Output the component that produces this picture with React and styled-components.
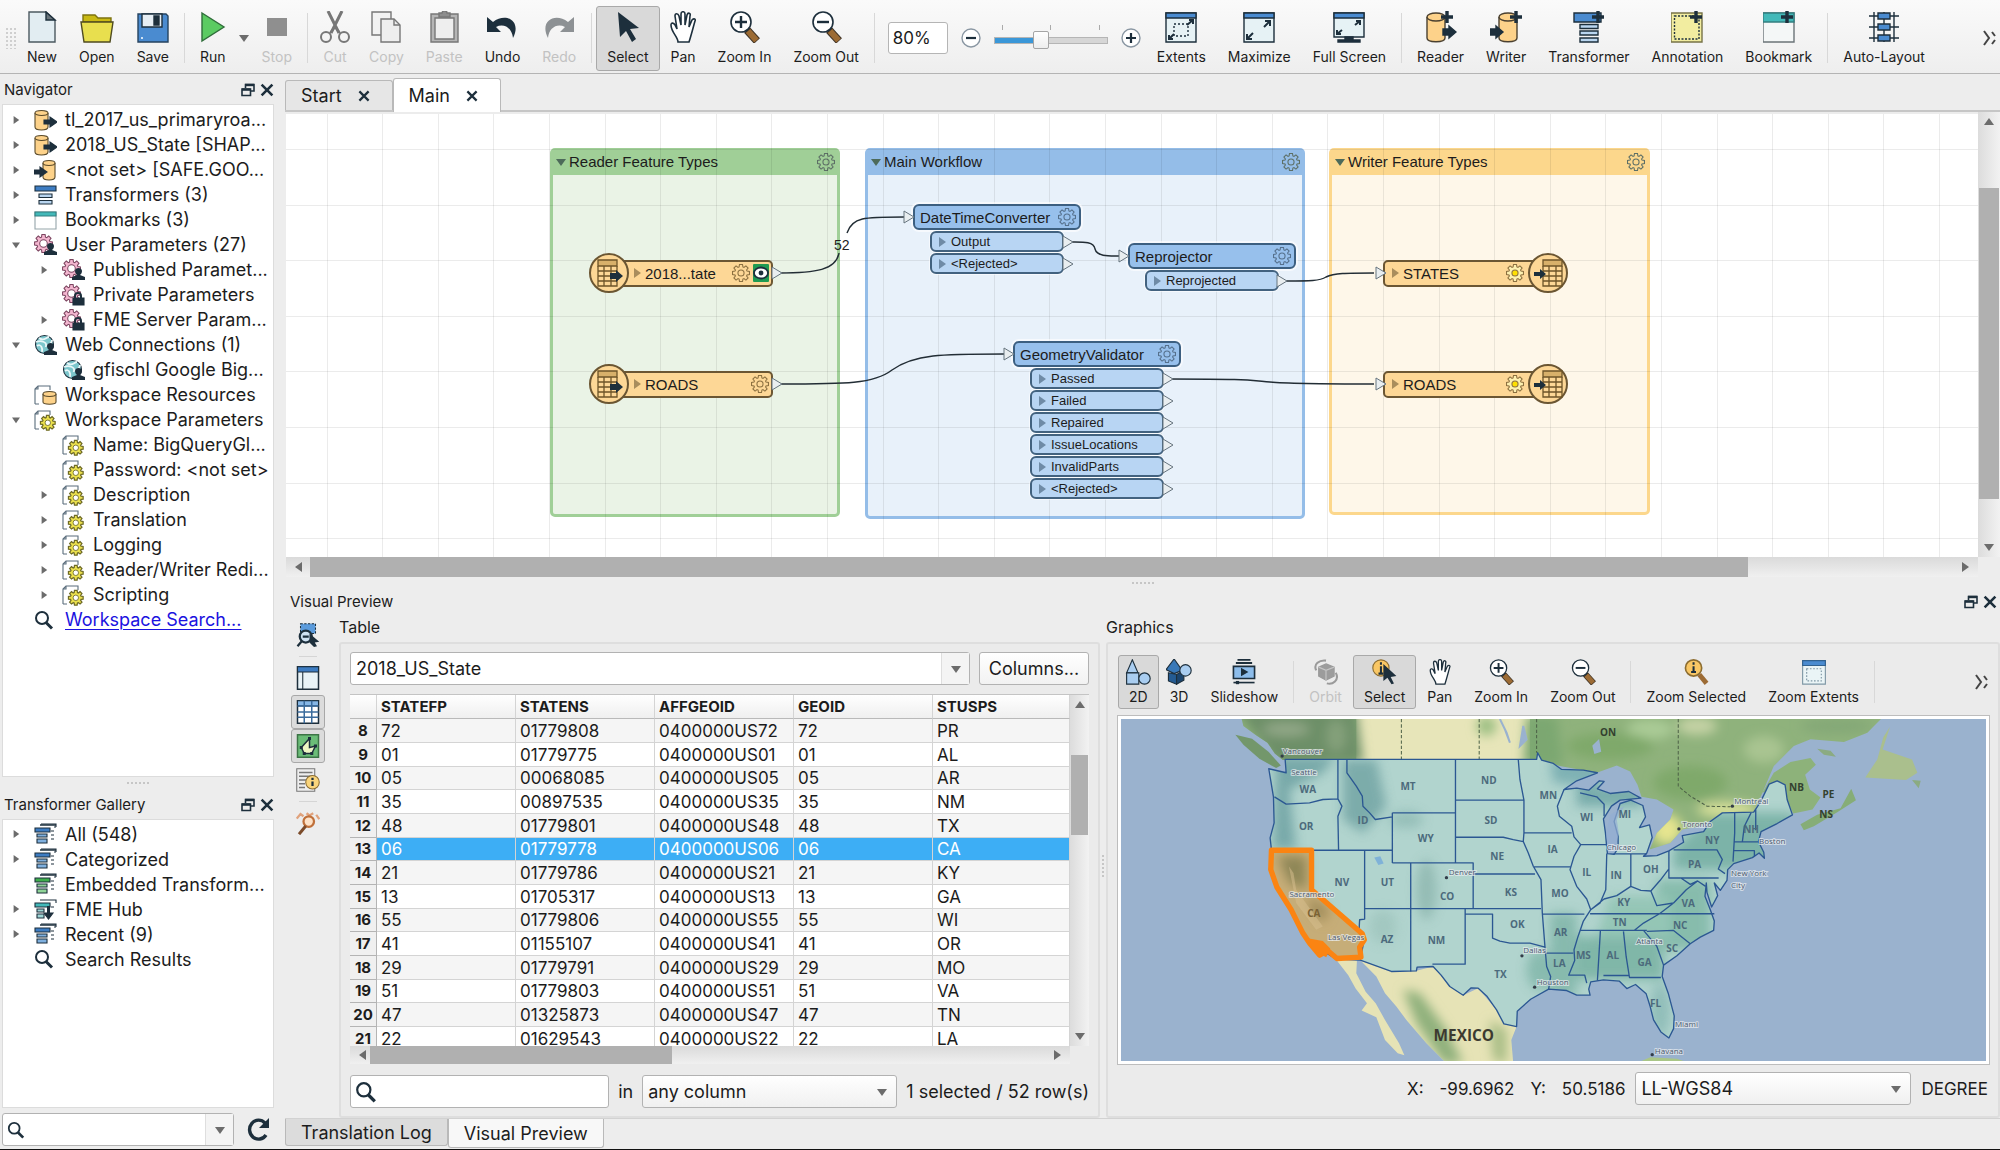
import React from "react";
import styled, { createGlobalStyle, css } from "styled-components";

const Global = createGlobalStyle`
  *, *::before, *::after { box-sizing: border-box; }
  html, body { margin: 0; height: 100%; }
  body { font-family: Inter, Roboto, "Liberation Sans", sans-serif; font-size: 16px; color: #1c1c1c; background: #ededed; }
  button, input, select { font: inherit; color: inherit; margin: 0; }
  svg { display: block; flex: none; }
`;

const INK = "#1d2f3c";

/* ---------- layout ---------- */
const Window = styled.div`
  display: flex; flex-direction: column; height: 100vh; min-height: 900px; min-width: 1280px; overflow: hidden;
  background: #ededed; border-bottom: 1px solid #111;
`;
const Toolbar = styled.header`
  display: flex; align-items: center; height: 74px; padding: 3px 4px 0 5px;
  background: linear-gradient(#fafafa, #eeeeee); border-bottom: 1px solid #b4b4b4;
`;
const Body = styled.div`display: flex; flex: 1; min-height: 0;`;
const Sidebar = styled.aside`display: flex; flex-direction: column; width: 275px; flex: none; padding: 0 1px 3px 2px;`;
const Main = styled.main`display: flex; flex-direction: column; flex: 1; min-width: 0; margin-left: 10px;`;
const Spacer = styled.div`flex: 1;`;

/* ---------- toolbar parts ---------- */
const Grip = styled.div`
  width: 11px; height: 22px; background-image: radial-gradient(#cfcfcf 1px, transparent 1px); background-size: 4px 4px;
`;
const Tool = styled.button`
  display: flex; flex-direction: column; align-items: center; gap: ${p => (p.$small ? 2 : 4)}px;
  padding: ${p => (p.$small ? 3 : 4)}px 10px 0; height: ${p => (p.$small ? 54 : 65)}px;
  border: 1px solid ${p => (p.$on ? "#a9a9a9" : "transparent")}; border-radius: 3px;
  background: ${p => (p.$on ? "#d9d9d9" : "none")}; color: ${p => (p.$off ? "#c2c2c2" : "#1c1c1c")};
  font-size: 14px; line-height: 20px; white-space: nowrap; flex: none;
  svg { margin: 0 -4px; }
`;
const Rule = styled.div`width: 1px; height: ${p => (p.$small ? 42 : 50)}px; margin: 0 4px; background: #d8d8d8; flex: none;`;
const DropArrow = styled.button`width: 14px; height: 40px; padding: 0; border: 0; background: none; display: grid; place-items: center;`;
const ZoomGroup = styled.div`display: flex; align-items: center; gap: 13px; margin: 0 5px 0 9px; flex: none;`;
const ZoomField = styled.input`
  width: 60px; height: 32px; padding: 0 4px; font-size: 17px; border: 1px solid #b5b5b5; border-radius: 3px; background: #fff;
`;
const RoundButton = styled.button`width: 20px; height: 20px; padding: 0; border: 0; background: none;`;
const SliderBox = styled.div`display: flex; flex-direction: column; width: 114px; gap: 2px; padding-bottom: 2px;`;
const Ticks = styled.div`display: flex; justify-content: space-between; padding: 0 8px; span { width: 1px; height: 5px; background: #aaa; }`;
const Slider = styled.input`
  appearance: none; width: 100%; height: 18px; background: none;
  &::-webkit-slider-runnable-track { height: 7px; border: 1px solid #b5b5b5; background: linear-gradient(90deg, #3a97d8 40%, #d6d6d6 40%); }
  &::-webkit-slider-thumb { appearance: none; width: 16px; height: 18px; margin-top: -7px; border: 1px solid #a5a5a5; border-radius: 2px; background: linear-gradient(#fff, #eee); }
`;

/* ---------- docks and trees ---------- */
const DockHead = styled.div`
  display: flex; align-items: center; justify-content: space-between; height: ${p => p.$h}px; flex: none; padding: 2px ${p => (p.$wide ? 3 : 0)}px 0 ${p => (p.$wide ? 5 : 2)}px;
  h2 { margin: 0; font-size: 15px; line-height: 20px; font-weight: 400; }
`;
const DockButtons = styled.div`display: flex; gap: 5px; button { padding: 0; border: 0; background: none; }`;
const Tree = styled.ul`
  list-style: none; margin: 0; padding: 2px 0; background: #fff; border: 1px solid #dcdcdc; overflow: hidden;
  flex: ${p => p.$flex}; min-height: 0;
`;
const Row = styled.li`
  display: flex; align-items: center; height: 25px; padding-left: ${p => (p.$deep ? 35 : 7)}px; white-space: nowrap; font-size: 18px;
  a { color: #1b12e0; text-underline-offset: 3px; text-decoration-thickness: 1px; }
`;
const Twist = styled.span`width: 12px; margin-right: 12px; display: grid; place-items: center;`;
const RowIcon = styled.span`width: 23px; margin-right: 8px;`;
const HandleDots = styled.div`
  height: ${p => p.$h}px; flex: none; display: grid; place-items: center;
  &::after { content: ""; width: 24px; height: 4px; background-image: radial-gradient(#c6c6c6 1px, transparent 1px); background-size: 4px 4px; }
`;
const SearchRow = styled.div`display: flex; align-items: center; gap: 12px; margin-top: 5px; padding-right: 4px; button { padding: 0; border: 0; background: none; }`;
const Combo = styled.div`
  display: flex; align-items: center; position: relative; height: 33px; border: 1px solid #b2b2b2; border-radius: 3px;
  background: ${p => (p.$plain ? "linear-gradient(#ffffff, #f0f0f0)" : "#fff")}; flex: ${p => p.$flex || "none"}; min-width: 0; width: ${p => p.$w || "auto"};
  padding-left: ${p => (p.$icon ? 4 : 0)}px;
  input, select { appearance: none; flex: 1; min-width: 0; height: 100%; border: 0; background: none; padding: 0 5px; font-size: 18px; outline: 0; }
`;
const ComboArrow = styled.span`
  position: absolute; right: 0; top: 0; bottom: 0; width: 28px; display: grid; place-items: center; pointer-events: none;
  ${p => p.$split && css`background: #f4f4f4; border-left: 1px solid #dedede;`}
`;

/* ---------- tabs ---------- */
const Tabs = styled.div`
  display: flex; align-items: flex-end; height: 38px; flex: none; border-bottom: 2px solid #c6c6c6; padding: 0;
`;
const Tab = styled.button`
  display: flex; align-items: center; gap: 16px; height: ${p => (p.$on ? 34 : 30)}px; padding: 0 22px 0 15px; margin-bottom: ${p => (p.$on ? -2 : 0)}px;
  border: 1px solid #b9b9b9; border-bottom: 0; border-radius: 3px 3px 0 0; background: ${p => (p.$on ? "#fff" : "#e6e6e6")}; font-size: 18px;
`;
const BottomTabs = styled.div`display: flex; align-items: flex-start; height: 31px; flex: none; border-top: 1px solid #d2d2d2;`;
const BottomTab = styled.button`
  height: ${p => (p.$on ? 29 : 27)}px; padding: 0 15px; border: 1px solid #b9b9b9; border-top: 0; border-radius: 0 0 3px 3px;
  background: ${p => (p.$on ? "#f8f8f8" : "#dcdcdc")}; font-size: 18px; white-space: nowrap;
`;

/* ---------- canvas ---------- */
const Workspace = styled.section`display: grid; grid-template-columns: 1fr 22px; grid-template-rows: 1fr 20px; flex: 1; min-height: 0; margin-left: 1px;`;
const Canvas = styled.div`position: relative; overflow: hidden; background: #fff; border-top: 2px solid #ececec;`;
const Layer = styled.svg`position: absolute; inset: 0; width: 100%; height: 100%;`;
const ScrollV = styled.div`
  display: flex; flex-direction: column; align-items: center; justify-content: space-between; padding: 5px 0; background: linear-gradient(90deg, #dcdcdc, #f2f2f2);
  position: relative;
`;
const ScrollH = styled.div`
  display: flex; align-items: center; justify-content: space-between; padding: 0 8px; background: linear-gradient(#dadada, #f0f0f0); position: relative;
`;
const Thumb = styled.div`
  position: absolute; background: #b0b0b0;
  ${p => (p.$v ? css`left: 1px; right: 1px; top: ${p.$from}; height: ${p.$len};` : css`top: 0; bottom: 0; left: ${p.$from}; width: ${p.$len};`)}
`;
const Bookmark = styled.div`
  position: absolute; left: ${p => p.$x}px; top: 34px; width: ${p => p.$w}px; height: ${p => p.$h}px;
  border: 3px solid ${p => p.$line}; border-radius: 5px; background: ${p => p.$fill};
`;
const BookmarkHead = styled.div`
  display: flex; align-items: center; gap: 3px; height: 24px; padding: 0 2px 2px 3px; background: ${p => p.$line};
  font: 15px/20px "Liberation Sans", Arial, sans-serif; svg:last-child { margin-left: auto; }
`;
const Node = styled.div`position: absolute; left: ${p => p.$x}px; top: ${p => p.$y}px; width: 168px; font-family: "Liberation Sans", Arial, sans-serif;`;
const NodeHead = styled.div`
  display: flex; align-items: center; justify-content: space-between; height: 26px; margin-bottom: 1px; padding: 0 3px 0 5px; font-size: 15px;
  border: 2px solid #3c5f80; border-radius: 6px; background: #97c0ec; box-shadow: 0 0 0 2px rgba(255,255,255,.6);
`;
const Port = styled.div`
  position: relative; display: flex; align-items: center; gap: 4px; width: 134px; height: 21px; margin: 0 0 1px 17px; padding-left: 5px; font-size: 13px;
  border: 2px solid #42627f; border-radius: 6px; background: #b8d5f3; box-shadow: 0 0 0 1px rgba(255,255,255,.6);
`;
const Feature = styled.div`
  position: absolute; left: ${p => p.$x}px; top: ${p => p.$y}px; display: flex; align-items: center; height: 40px;
  flex-direction: ${p => (p.$writer ? "row-reverse" : "row")}; font: 15px "Liberation Sans", Arial, sans-serif;
`;
const FeatureBar = styled.div`
  display: flex; align-items: center; gap: 3px; width: 164px; height: 27px; border: 2px solid #6b5633; border-radius: 5px; background: #fdd796;
  padding: ${p => (p.$writer ? "0 21px 0 5px" : "0 2px 0 21px")}; margin: ${p => (p.$writer ? "0 -19px 0 0" : "0 0 0 -20px")};
  b { font-weight: 400; margin-right: auto; }
`;
const Disc = styled.div`width: 40px; height: 40px; border: 2px solid #6b5633; border-radius: 50%; background: #fdd796; z-index: 1; display: grid; place-items: center;`;

/* ---------- preview ---------- */
const Dock = styled.section`display: flex; flex-direction: column; flex: none;`;
const DockBody = styled.div`display: flex; height: 504px;`;
const ToolColumn = styled.div`display: flex; flex-direction: column; align-items: center; width: 54px; padding: 4px 9px 0 0; flex: none;`;
const SideTool = styled.button`
  display: grid; place-items: center; width: 34px; height: 34px; padding: 0; border: 1px solid ${p => (p.$on ? "#a8a8a8" : "transparent")}; border-radius: 3px;
  background: ${p => (p.$on ? "#dcdcdc" : "none")}; flex: none;
`;
const SideRule = styled.div`width: 18px; height: 1px; margin: 4px 0; background: #d5d5d5;`;
const Group = styled.section`display: flex; flex-direction: column; ${p => p.$w ? css`width: ${p.$w}px; flex: none;` : css`flex: 1; min-width: 0;`}`;
const GroupTitle = styled.h3`margin: 0; height: 28px; font-size: 16px; line-height: 27px; font-weight: 400;`;
const GroupBox = styled.div`
  display: flex; flex-direction: column; flex: 1; min-height: 0; border: 2px solid #dedede; border-radius: 3px; padding: ${p => p.$pad}; background: #ebebeb;
`;
const Line = styled.div`display: flex; align-items: center; gap: ${p => p.$gap}px; flex: none; margin-bottom: ${p => p.$mb || 0}px; font-size: 18px; white-space: nowrap;`;
const GraphicsTools = styled.div`display: flex; align-items: center; flex: none; margin-bottom: 7px; padding: 0 10px;`;
const Status = styled.div`display: flex; align-items: center; justify-content: flex-end; gap: 10px; flex: none; padding-right: 10px; font-size: 17px; white-space: nowrap;`;
const Coordinates = styled.div`display: flex; gap: 16px;`;
const PushButton = styled.button`height: 33px; width: 110px; border: 1px solid #b2b2b2; border-radius: 3px; background: linear-gradient(#fff, #f2f2f2); font-size: 18px; padding: 0;`;
const TableFrame = styled.div`display: grid; grid-template-columns: 1fr 19px; grid-template-rows: 1fr 18px; flex: 1; min-height: 0; margin-bottom: 11px; border-top: 1px solid #c4c4c4;`;
const TableView = styled.div`overflow: hidden; min-height: 0; background: #fff;`;
const Data = styled.table`
  width: 100%; border-collapse: separate; border-spacing: 0; table-layout: fixed; font-size: 17px; line-height: 16px;
  th, td { padding: 0 0 0 4px; height: 24px; text-align: left; white-space: nowrap; border-right: 1px solid #d4d4d4; border-bottom: 1px solid #d4d4d4; }
  thead th { height: 24px; font-size: 15px; background: linear-gradient(#fff, #efefef); border-bottom-color: #b9b9b9; }
  tbody th { padding: 0; text-align: center; font-size: 15px; background: #f0f0f0; border-color: #b4b4b4; }
  tbody tr:nth-child(odd) td { background: #f5f5f5; }
  tbody tr:nth-child(3n) > * { height: 23px; }
  tbody tr[aria-selected="true"] td { background: #3daef5; color: #fff; }
`;
const Divider = styled.div`
  width: 6px; flex: none; display: grid; place-items: center;
  &::after { content: ""; width: 4px; height: 24px; background-image: radial-gradient(#c6c6c6 1px, transparent 1px); background-size: 4px 4px; }
`;
const MapFrame = styled.div`flex: 1; min-height: 0; border: 3px solid #fff; outline: 1px solid #bdbdbd; margin: 0 9px 8px 10px; svg { width: 100%; height: 100%; }`;

/* ---------- small glyphs ---------- */
const Tri = ({ d = "right", s = 8, c = "#6c6c6c" }) => (
  <svg width={s} height={s} viewBox="0 0 10 10">
    <path fill={c} d={{ right: "M2 0L9 5L2 10Z", left: "M8 0L1 5L8 10Z", down: "M0 2H10L5 9Z", up: "M0 8H10L5 1Z" }[d]} />
  </svg>
);
const Float = () => (
  <svg width="14" height="14" viewBox="0 0 14 14" fill="none" stroke={INK} strokeWidth="1.6">
    <path d="M4.5 5V1.5H13V8H10" /><path d="M4 2H13" strokeWidth="2.4" /><path d="M1 6H9.5V12.5H1Z" /><path d="M1 6.6H9.5" strokeWidth="2.4" />
  </svg>
);
const Cross = ({ s = 13 }) => <svg width={s} height={s} viewBox="0 0 13 13" stroke={INK} strokeWidth="2.4"><path d="M1.5 1.5L11.5 11.5M11.5 1.5L1.5 11.5" /></svg>;
const Chevrons = () => <svg width="14" height="18" viewBox="0 0 14 18" fill="none" stroke="#444" strokeWidth="2"><path d="M2 2L7 9L2 16M10 3L13 7M10 15L13 11" /></svg>;
const Lens = ({ s = 20 }) => (
  <svg width={s} height={s} viewBox="0 0 20 20" fill="none" stroke={INK}><circle cx="8" cy="8" r="6" strokeWidth="2" /><path d="M12 12.5L18 18.5" strokeWidth="3" /></svg>
);
const gearPath = (() => {
  const n = 8, pts = [];
  for (let i = 0; i < n; i++) {
    [[-0.3, 7], [-0.18, 9.6], [0.18, 9.6], [0.3, 7]].forEach(([o, r]) => {
      const a = (i * 2 * Math.PI) / n + o;
      pts.push(`${(10 + r * Math.sin(a)).toFixed(1)} ${(10 - r * Math.cos(a)).toFixed(1)}`);
    });
  }
  return "M" + pts.join("L") + "Z";
})();
const Gear = ({ s = 18, fill = "none", stroke = "#55708c", core = "none", w = 1.2 }) => (
  <svg width={s} height={s} viewBox="0 0 20 20" fill={fill} stroke={stroke} strokeWidth={w}><path d={gearPath} /><circle cx="10" cy="10" r="3.4" fill={core} /></svg>
);
const Plus = ({ x = 24, y = 6 }) => <path d={`M${x - 6} ${y}H${x + 6}M${x} ${y - 6}V${y + 6}`} stroke={INK} strokeWidth="3.4" />;
const Arrow = ({ x, y }) => <path d={`M${x} ${y - 3}H${x + 6}V${y - 6}L${x + 13} ${y}L${x + 6} ${y + 6}V${y + 3}H${x}Z`} fill={INK} />;
const S = ({ children, w = 32, s, h, ...p }) => <svg width={s || w} height={h || s || 32} viewBox={`0 0 ${w} 32`} fill="none" stroke={INK} strokeWidth="1.4" {...p}>{children}</svg>;

/* ---------- toolbar icons ---------- */
const Cyl = ({ x = 4 }) => (<g fill="#fdd28a" stroke="#4a4030"><path d={`M${x} 6V27C${x} 32 ${x + 18} 32 ${x + 18} 27V6`} /><ellipse cx={x + 9} cy="6" rx="9" ry="4" /></g>);
const lensHandle = <g><path d="M19 19L29 30" stroke="#3d3226" strokeWidth="8" /><path d="M20 20L28.500 29.500" stroke="#9c6b34" strokeWidth="6" /></g>;
const ic = {
  New: <S><path d="M3 1H20L29 9V31H3Z" fill="#e2edf2" stroke="#4c5960" /><path d="M20 1V9H29Z" fill="#6a757b" /></S>,
  Open: <S w={34}><path d="M3 11V4H15L18 7H31V11Z" fill="#c9b913" stroke="#7d7310" /><path d="M1 11H33L30 31H4Z" fill="#e8df4e" stroke="#4f4b20" /></S>,
  Save: <S><path d="M1 3H29L31 5V31H1Z" fill="#4a8bd0" stroke="#26435f" /><path d="M5 3H25V16H5Z" fill="#e6eef4" /><path d="M17 5H22V14H17Z" fill={INK} /><circle cx="5" cy="27" r="1" fill="#fff" stroke="none" /></S>,
  Run: <S><path d="M5 2L27 16L5 30Z" fill="#5bcb62" stroke="#2f6d3a" /></S>,
  Stop: <S><path d="M6 7H26V25H6Z" fill="#8f8f8f" stroke="none" /></S>,
  Cut: <S stroke="#777" strokeWidth="2"><path d="M9 0L20 22M23 0L12 22" strokeWidth="3" /><ellipse cx="7" cy="26" rx="5" ry="5" /><ellipse cx="25" cy="26" rx="5" ry="5" /><path d="M11 22L16 16L21 22" /></S>,
  Copy: <S stroke="#777"><path d="M2 1H21V24H2Z" fill="#f2f2f2" /><path d="M11 8H24L30 14V31H11Z" fill="#eee" /><path d="M24 8V14H30" /></S>,
  Paste: <S stroke="#777"><path d="M3 3H30V31H3Z" fill="#b5b5b5" /><path d="M7 7H26V28H7Z" fill="#eee" /><path d="M11 6V2H14C14-1 19-1 19 2H22V6Z" fill="#8d8d8d" /></S>,
  Undo: <S><path d="M1 6V21H15L10 16C18 12 26 17 27 27C36 10 20 1 7 11Z" fill={INK} stroke="none" /></S>,
  Redo: <S><path d="M31 6V21H17L22 16C14 12 6 17 5 27C-4 10 12 1 25 11Z" fill="#8d9194" stroke="none" /></S>,
  Select: <S><path d="M6 1L27 17L18 18L24 28L20 31L14 20L8 26Z" fill={INK} stroke="none" /></S>,
  Pan: <S w={26}><path d="M8 31C8 26 1 21 1 14C1 11 4 12 5 14L7 18L5 5C5 2 8 2 9 5L11 14V3C11 0 15 0 15 3V14L17 4C18 1 21 2 20 5L19 16L22 9C24 7 26 8 25 10C23 17 21 25 19 31Z" fill="#fff" strokeWidth="1.6" /></S>,
  ZoomIn: <S>{lensHandle}<circle cx="13" cy="11" r="10" fill="#fff" strokeWidth="1.6" /><path d="M7 11H19M13 5V17" strokeWidth="2.4" /></S>,
  ZoomOut: <S>{lensHandle}<circle cx="13" cy="11" r="10" fill="#fff" strokeWidth="1.6" /><path d="M7 11H19" strokeWidth="2.4" /></S>,
  Extents: <S><path d="M1 2H31V31H1Z" fill="#e6f2f5" /><path d="M1 2H31V7H1Z" fill="#4a8bd0" /><path d="M9 13H23V25H9Z" strokeDasharray="2 2" /><path d="M22 14L28 9M24 9H28V13M9 23L4 28M4 24V28H8" strokeWidth="2" /></S>,
  Maximize: <S><path d="M1 2H31V31H1Z" fill="#e6f2f5" /><path d="M1 2H31V7H1Z" fill="#4a8bd0" /><path d="M21 16L27 10M22 10H27V15M10 22L4 28M4 23V28H9" strokeWidth="2" /></S>,
  FullScreen: <S><path d="M1 2H31V26H1Z" fill="#e6f2f5" /><path d="M1 2H31V7H1Z" fill="#4a8bd0" /><path d="M22 14L27 10M23 10H27V14M9 19L4 23M4 19V23H8" strokeWidth="2" /><path d="M12 26H20V29H27V31H5V29H12Z" fill={INK} /></S>,
  Reader: <S><Cyl x={2} /><Plus x={22} y={6} /><Arrow x={18} y={21} /></S>,
  Writer: <S><Cyl x={9} /><Plus x={26} y={6} /><Arrow x={0} y={21} /></S>,
  Transformer: <S><path d="M1 2H28V11H1Z" fill="#4a8bd0" /><path d="M7 13.500H25V17.500H7ZM7 20H25V24H7ZM7 27H25V31H7Z" fill="#b9d5ef" /><Plus x={25} y={6} /></S>,
  Annotation: <S><path d="M0 2H31V31H0Z" fill="#f2eda0" stroke="#777347" /><path d="M3.500 5H28V28H3.500Z" strokeDasharray="2 1.500" /><Plus x={25} y={6} /></S>,
  Bookmark: <S><path d="M0 2H31V31H0Z" fill="#f4f7f7" stroke="#6b7478" /><path d="M0 2H31V11H0Z" fill="#43b9b9" stroke="#337f80" /><Plus x={24} y={6} /></S>,
  AutoLayout: <S><path d="M1 5H31M1 16H31M1 27H31M6 1V31M16 1V31M26 1V31" /><path d="M10 2H22V8H10ZM10 13H22V19H10ZM10 24H22V30H10Z" fill="#4a8bd0" /></S>,
};

/* ---------- tree icons ---------- */
const T = p => <svg width="23" height="22" viewBox="0 0 23 22" fill="none" stroke={INK} strokeWidth="1.1" {...p} />;
const person = <path d="M13 12C13 8 20 8 20 12C20 14 19 15 18 16L23 18V21H10V18L15 16C14 15 13 14 13 12Z" fill={INK} stroke="none" />;
const lock = <g><path d="M13 14V12C13 8 19 8 19 12V14" strokeWidth="2" /><path d="M11 14H22V21H11Z" fill={INK} /></g>;
const pinkGear = <g transform="scale(.95)"><path d={gearPath} fill="#f3b6cf" stroke="#7c4560" /><circle cx="10" cy="10" r="4" fill="#fff" stroke="#7c4560" /></g>;
const page = <path d="M1 20V5L4 2H16V6M4 2V5H1M5 20H1" stroke="#5a6d7c" fill="none" />;
const globe = <g><circle cx="10.500" cy="10.500" r="9" fill="#7cc6cc" /><path d="M5 4C10 8 12 3 15 3M3 12C7 9 9 15 8 18M2 8C7 6 13 8 12 12C15 11 18 9 18 6" stroke="#e9f7f8" strokeWidth="1.800" /></g>;
const tf = (a, b) => (
  <T><path d="M7 1H22V4M22 4H20M17 8H20M17 12H20M17 16H20" /><path d="M6 2H22" strokeWidth="1.500" /><path d="M1 5H16V9H1Z" fill={a} /><path d="M3 11H13V14H3ZM3 16H13V20H3Z" fill={b} /></T>
);
const tree = {
  reader: <T><path d="M1 4V18C1 22 14 22 14 18V4" fill="#fdd28a" stroke="#5a4a2a" /><ellipse cx="7.500" cy="4" rx="6.500" ry="2.500" fill="#fdd28a" stroke="#5a4a2a" /><path d="M10 11H16V8L23 13L16 18V15H10Z" fill={INK} /></T>,
  writer: <T><path d="M9 4V18C9 22 21 22 21 18V4" fill="#fdd28a" stroke="#5a4a2a" /><ellipse cx="15" cy="4" rx="6" ry="2.500" fill="#fdd28a" stroke="#5a4a2a" /><path d="M0 11H6V8L13 13L6 18V15H0Z" fill={INK} /></T>,
  tf: <T><path d="M1 2H22V7H1Z" fill="#3d7cc2" /><path d="M5 10H18V13.500H5ZM5 16.500H18V20H5Z" fill="#b9d5ef" /></T>,
  bm: <T><path d="M1 3H22V20H1Z" fill="#fff" stroke="#95a5aa" /><path d="M1 3H22V7H1Z" fill="#43b9b9" stroke="#337f80" /></T>,
  user: <T>{pinkGear}{person}</T>,
  lock: <T>{pinkGear}{lock}</T>,
  web: <T>{globe}{person}</T>,
  res: <T>{page}<path d="M9 10V18C9 21 22 21 22 18V10" fill="#fdd28a" stroke="#5a4a2a" /><ellipse cx="15.500" cy="10" rx="6.500" ry="2.500" fill="#fdd28a" stroke="#5a4a2a" /></T>,
  wp: <T>{page}<g transform="translate(6 6) scale(.78)"><path d={gearPath} fill="#ece14e" stroke="#6e6a26" strokeWidth="1.600" /><circle cx="10" cy="10" r="3.500" fill="#fff" stroke="#6e6a26" /></g></T>,
  lens: <Lens />,
  blue: tf("#3d7cc2", "#7fb0df"),
  green: tf("#3fae4c", "#8fd497"),
  hub: <T><path d="M6 2H22V5M17 9H20" /><path d="M1 5H16V9H1Z" fill="#43b9b9" /><path d="M3 11H10V14H3ZM3 16H10V20H3Z" fill="#9fd6d6" /><path d="M14.500 8V16" strokeWidth="3" /><path d="M10 15H19L14.500 21Z" fill={INK} /></T>,
};

const NAV = [
  ["reader", "tl_2017_us_primaryroa...", 0, "right"], ["reader", "2018_US_State [SHAP...", 0, "right"], ["writer", "<not set> [SAFE.GOO...", 0, "right"],
  ["tf", "Transformers (3)", 0, "right"], ["bm", "Bookmarks (3)", 0, "right"], ["user", "User Parameters (27)", 0, "down"],
  ["user", "Published Paramet...", 1, "right"], ["lock", "Private Parameters", 1], ["lock", "FME Server Param...", 1, "right"],
  ["web", "Web Connections (1)", 0, "down"], ["web", "gfischl Google Big...", 1], ["res", "Workspace Resources", 0], ["wp", "Workspace Parameters", 0, "down"],
  ["wp", "Name: BigQueryGl...", 1], ["wp", "Password: <not set>", 1], ["wp", "Description", 1, "right"], ["wp", "Translation", 1, "right"], ["wp", "Logging", 1, "right"],
  ["wp", "Reader/Writer Redi...", 1, "right"], ["wp", "Scripting", 1, "right"], ["lens", "Workspace Search...", 0, null, true],
];
const GALLERY = [
  ["blue", "All (548)", 0, "right"], ["blue", "Categorized", 0, "right"], ["green", "Embedded Transform...", 0], ["hub", "FME Hub", 0, "right"],
  ["blue", "Recent (9)", 0, "right"], ["lens", "Search Results", 0],
];
const TreeList = ({ items, flex, label }) => (
  <Tree $flex={flex} aria-label={label}>
    {items.map(([icon, text, deep, open, link]) => (
      <Row key={text} $deep={deep}>
        <Twist>{open && <Tri d={open} />}</Twist><RowIcon>{tree[icon]}</RowIcon>{link ? <a href="#search">{text}</a> : text}
      </Row>
    ))}
  </Tree>
);
const Head = ({ children, h, wide }) => (
  <DockHead $h={h} $wide={wide}><h2>{children}</h2><DockButtons><button aria-label="Float"><Float /></button><button aria-label="Close"><Cross s={14} /></button></DockButtons></DockHead>
);

/* ---------- workflow ---------- */
const Grid = () => (
  <Layer>
    <defs>
      <pattern id="grid" width="278" height="278" x="263" y="35" patternUnits="userSpaceOnUse">
        {[0, 56, 111, 167, 222].map(v => <path key={v} d={`M${v + .5} 0V278M0 ${v + .5}H278`} stroke="#000" strokeOpacity=".08" />)}
      </pattern>
    </defs>
    <rect width="100%" height="100%" fill="url(#grid)" />
  </Layer>
);
const outTri = (x, y) => <path key={`${x}-${y}`} d={`M${x} ${y - 6}L${x + 10} ${y}L${x} ${y + 6}Z`} fill="#e9eef0" stroke="#66747e" />;
const Links = () => (
  <Layer>
    <g fill="none" stroke="#222d35" strokeWidth="1.400">
      <path d="M493 159C530 159 550 156 553 139M561 119C566 103 578 103 618 103" />
      <path d="M783 128C796 128 808 127 809 135C811 143 824 142 834 142" />
      <path d="M1000 167C1024 167 1034 167 1040 163C1048 159 1060 159 1088 159" />
      <path d="M493 270C560 270 588 270 606 256C628 240 656 240 718 240" />
      <path d="M884 265C960 265 960 266 984 268C1004 270 1030 270 1088 270" />
    </g>
    <text x="548" y="136" fontFamily="Liberation Sans, sans-serif" fontSize="14" fill="#222">52</text>
    {[[486, 159], [486, 270], [618, 103], [833, 142], [718, 240], [1090, 159], [1090, 270], [777, 128], [777, 150], [991, 167],
      [877, 265], [877, 287], [877, 309], [877, 331], [877, 353], [877, 375]].map(([x, y]) => outTri(x, y))}
  </Layer>
);
const GridGlyph = ({ writer }) => (
  <svg width="32" height="28" viewBox="0 0 32 28" fill="none" stroke="#6d5428" strokeWidth="1.300">
    <g transform={writer ? "translate(10 0)" : "translate(4 0)"}><path d="M1 1H20V7H1Z" fill="#d8b06a" /><path d="M1 7V27H20V7M1 12H20M1 17H20M1 22H20M7 7V27M14 7V27" /></g>
    <path d={writer ? "M2 13H8V10L14 15L8 20V17H2Z" : "M17 14H23V11L30 17L23 23V20H17Z"} fill={INK} stroke="none" />
  </svg>
);
const Transformer = ({ x, y, name, ports }) => (
  <Node $x={x} $y={y}>
    <NodeHead>{name}<Gear s={18} /></NodeHead>
    {ports.map(p => <Port key={p}><Tri s={10} c="#6f8ba6" />{p}</Port>)}
  </Node>
);
const FeatureType = ({ x, y, name, writer, inspect }) => (
  <Feature $x={x} $y={y} $writer={writer}>
    <Disc><GridGlyph writer={writer} /></Disc>
    <FeatureBar $writer={writer}>
      <Tri s={10} c="#a98d5c" /><b>{name}</b><Gear s={18} stroke="#8c7040" core={writer ? "#ffe000" : "none"} fill={writer ? "#fdf0b0" : "none"} />
      {inspect && <svg width="16" height="18" viewBox="0 0 16 18"><rect width="16" height="18" rx="1" fill="#1f9a52" /><ellipse cx="8" cy="9" rx="7" ry="5.500" fill="#fff" stroke={INK} strokeWidth="1.800" /><circle cx="8" cy="9" r="2.400" fill={INK} /></svg>}
    </FeatureBar>
  </Feature>
);
const BM = ({ x, w, h, line, fill, children }) => (
  <Bookmark $x={x} $w={w} $h={h} $line={line} $fill={fill}>
    <BookmarkHead $line={line}><Tri d="down" s={10} c="#4d6a5a" />{children}<Gear s={18} stroke="#5d6f66" /></BookmarkHead>
  </Bookmark>
);

/* ---------- preview data ---------- */
const COLS = ["STATEFP", "STATENS", "AFFGEOID", "GEOID", "STUSPS"];
const ROWS = [[8, "72", "01779808", "PR"], [9, "01", "01779775", "AL"], [10, "05", "00068085", "AR"], [11, "35", "00897535", "NM"], [12, "48", "01779801", "TX"],
  [13, "06", "01779778", "CA"], [14, "21", "01779786", "KY"], [15, "13", "01705317", "GA"], [16, "55", "01779806", "WI"], [17, "41", "01155107", "OR"],
  [18, "29", "01779791", "MO"], [19, "51", "01779803", "VA"], [20, "47", "01325873", "TN"], [21, "22", "01629543", "LA"]];

const g = {
  d2: <S s={26}><path d="M9 1L16 17H2Z" fill="#a9cdf0" /><path d="M2 17H17V31H2Z" fill="#a9cdf0" /><circle cx="24" cy="24" r="7" fill="#a9cdf0" /></S>,
  d3: <S s={26}><path d="M10 0L20 14L10 18L0 13Z" fill="#3878b8" /><path d="M3 17L13 19V31L3 27Z" fill="#245b92" /><path d="M13 19L22 14V26L13 31Z" fill="#1b456f" /><circle cx="24" cy="14" r="7" fill="#a9cdf0" /></S>,
  slide: <S s={26}><path d="M8 1H24M6 5H26" strokeWidth="2.500" /><path d="M3 9H29V24H3Z" fill="#8dbdeb" strokeWidth="2" /><path d="M13 12L20 16L13 20Z" fill={INK} /><path d="M3 29H29" strokeWidth="2" /><path d="M8 27V31" strokeWidth="4" /></S>,
  orbit: <S s={26} stroke="#9a9a9a"><path d="M16 6L26 10V21L16 26L7 21V10Z" fill="#9c9c9c" /><path d="M7 10L16 14L26 10M16 14V26" stroke="#c5c5c5" /><path d="M4 14C0 6 8 1 16 2M28 17C33 26 24 32 17 30" strokeWidth="2.500" /></S>,
  sel: <S s={26}><circle cx="11" cy="11" r="10" fill="#f9c765" stroke="#8c6d31" /><path d="M11 9V18M8 18H14M11 4V7" strokeWidth="2.500" /><path d="M14 6L30 21L23 22L27 30L24 31L19 23L14 27Z" fill={INK} stroke="none" /></S>,
  zsel: <S s={26}><path d="M20 19L29 30" stroke="#9c6b34" strokeWidth="6" /><circle cx="13" cy="11" r="10" fill="#f9c765" stroke="#8c6d31" strokeWidth="2" /><path d="M13 9V16M10 16H16M13 4V7" strokeWidth="2.500" /></S>,
  zext: <S s={26}><path d="M2 2H30V31H2Z" fill="#eaf4f6" stroke="#7f97a5" /><path d="M2 2H30V8H2Z" fill="#4a8bd0" stroke="#31618f" /><path d="M7 12H25V27H7Z" strokeDasharray="2 2" stroke="#7f97a5" /></S>,
};
const small = icon => React.cloneElement(icon, { s: 26 });

const STATES = [["WA", 595, 250], ["OR", 590, 362], ["ID", 760, 344], ["MT", 895, 242], ["ND", 1137, 224], ["SD", 1143, 342], ["WY", 948, 397], ["NE", 1162, 451], ["NV", 697, 529],
  ["UT", 833, 530], ["CO", 1012, 572], ["KS", 1203, 559], ["CA", 613, 622], ["AZ", 832, 699], ["NM", 980, 703], ["OK", 1222, 656], ["TX", 1172, 803], ["MN", 1315, 270], ["IA", 1328, 431],
  ["WI", 1430, 334], ["MI", 1544, 324], ["IL", 1430, 498], ["IN", 1518, 509], ["OH", 1622, 491], ["MO", 1350, 562], ["KY", 1541, 590], ["TN", 1529, 648], ["AR", 1352, 679], ["LA", 1348, 773],
  ["MS", 1420, 748], ["AL", 1508, 748], ["GA", 1603, 770], ["SC", 1686, 727], ["NC", 1710, 658], ["VA", 1734, 591], ["PA", 1753, 474], ["NY", 1806, 404], ["FL", 1636, 892], ["NH", 1922, 370]];
const CITIES = [["Vancouver", 520, 135], ["Seattle", 545, 198], ["Denver", 1017, 497], ["Sacramento", 540, 562], ["Las Vegas", 655, 692], ["Dallas", 1240, 730], ["Houston", 1280, 826], ["Toronto", 1716, 352],
  ["Montréal", 1872, 284], ["Boston", 1946, 404], ["New York", 1862, 498], ["City", 1862, 534], ["Atlanta", 1578, 702], ["Miami", 1694, 950], ["Havana", 1634, 1032], ["Chicago", 1490, 422]];
const US = "M527 150H1280L1283 130L1295 152L1330 162L1355 180L1420 182L1462 190L1400 214L1362 240L1400 236L1436 242L1468 214L1482 216L1462 238L1500 252L1556 246L1592 266L1530 272L1504 290L1480 328L1486 370L1489 404L1492 432L1512 434L1524 416L1524 380L1512 336L1530 282L1562 272L1598 288L1606 322L1588 354L1618 346L1626 384L1610 430L1600 440L1640 438L1676 424L1720 398L1716 378L1780 366L1800 336L1836 310L1930 308L1950 278L1976 224L2000 214L2024 226L2030 270L2046 316L2000 342L1952 366L1944 396L1960 428L1962 446L1946 430L1926 444L1870 462L1852 480L1850 512L1830 542L1812 520L1822 558L1804 592L1790 548L1788 520L1784 560L1800 600L1812 634L1810 662L1770 682L1740 702L1700 738L1660 766L1656 800L1674 850L1692 918L1690 956L1676 984L1652 966L1630 930L1620 890L1608 852L1576 824L1550 836L1528 814L1480 810L1442 816L1436 838L1440 856L1400 856L1370 842L1316 838L1262 868L1222 904L1220 950L1182 942L1160 900L1132 860L1105 835L1084 834L1060 856L1020 830L994 796L970 770L922 772L920 783L845 785L752 751L680 748L654 732L600 706L580 670L545 600L502 532L480 480L486 420L482 385L494 340L492 262L478 178L530 190Z";
const Map = () => (
  <svg viewBox="33 29 2595 1024" preserveAspectRatio="xMidYMid slice" role="img" aria-label="Map of 2018_US_State">
    <defs>
      <filter id="soft" x="-30%" y="-30%" width="160%" height="160%"><feGaussianBlur stdDeviation="16" /></filter>
      <clipPath id="us"><path d={US} /></clipPath>
      <clipPath id="canada"><path d="M390 0L402 50L440 78L474 100L496 132L520 152H1285L1350 170L1460 190L1520 168L1560 186L1582 226L1594 262L1640 270L1690 300L1680 330L1640 370L1618 420L1680 400L1716 360L1770 350L1840 310L1930 308L1956 250L1990 170L2050 110L2100 90L2200 98L2270 70L2340 0Z" /></clipPath>
      <clipPath id="mx"><path d="M752 751L845 785L920 783L970 770L1020 830L1060 856L1105 835L1160 900L1182 942L1220 950L1204 990L1210 1060H1010L950 1000L890 930L860 890L826 850L800 800Z" /></clipPath>
    </defs>
    <rect x="0" y="0" width="2700" height="1100" fill="#9ab2ce" />
    <g clipPath="url(#canada)">
      <rect width="2700" height="500" fill="#8fb27c" />
      <rect x="740" width="520" height="160" fill="#e7e5b9" />
      <g filter="url(#soft)">
        <path d="M380 0H740L760 160H500Z" fill="#6d8f68" /><ellipse cx="530" cy="60" rx="70" ry="20" fill="#93a888" /><ellipse cx="680" cy="80" rx="30" ry="50" fill="#84a07a" />
        <path d="M1250 20L1340 20L1360 170H1240Z" fill="#7ba771" /><ellipse cx="1130" cy="50" rx="30" ry="30" fill="#9cbf83" />
        <ellipse cx="1620" cy="60" rx="70" ry="30" fill="#aacb96" /><ellipse cx="1760" cy="50" rx="60" ry="26" fill="#c6d3a6" /><ellipse cx="1960" cy="120" rx="60" ry="40" fill="#a9c491" /><ellipse cx="2180" cy="50" rx="110" ry="24" fill="#84a877" /><ellipse cx="1500" cy="110" rx="130" ry="40" fill="#7fa96b" />
        <ellipse cx="1740" cy="220" rx="110" ry="50" fill="#7fa96b" /><ellipse cx="1670" cy="360" rx="45" ry="45" fill="#e6e58f" /><ellipse cx="1850" cy="300" rx="90" ry="22" fill="#dbe29b" />
      </g>
      <path d="M1170 29L1190 70L1200 100L1185 60ZM1240 50L1230 110L1250 90ZM1450 110L1465 95L1470 125L1455 130Z" fill="#9ab2cf" stroke="#9ab2cf" strokeWidth="6" />
      <path d="M875 29V150M1108 29V150M1280 29V130M1704 29V230L1740 260L1790 290L1860 292" fill="none" stroke="#4c6046" strokeWidth="3" strokeDasharray="10 6" />
    </g>
    <path d="M378 76L428 88L478 128L514 168L500 176L450 148L402 106Z" fill="#73976b" />
    <path d="M1956 250L1990 190L2040 158L2100 146L2116 166L2084 196L2098 240L2130 264L2106 300L2048 312L2030 270L2024 226Z" fill="#8db27a" />
    <path d="M2070 344L2120 316L2190 296L2222 238L2236 272L2180 308L2110 350L2080 362Z" fill="#86ad77" />
    <path d="M2338 52L2316 120L2362 136L2404 150L2420 190L2386 212L2264 204L2300 150L2318 84Z" fill="#aabf8d" />
    <path d="M2120 118L2160 124L2176 142L2140 136ZM2404 212L2430 214L2424 236Z" fill="#8bab82" />
    <path d="M1594 1053L1620 1042L1700 1046L1720 1053Z" fill="#a9c687" />
    <g clipPath="url(#mx)">
      <rect x="700" y="700" width="560" height="380" fill="#e6e3b6" />
      <g filter="url(#soft)"><path d="M880 840L930 850L1010 960L1060 1060H1000L920 940Z" fill="#8fb07c" /><path d="M1140 930L1190 960L1190 1060L1150 1050Z" fill="#a9bd86" /></g>
    </g>
    <path d="M680 750L742 752L740 790L768 846L798 880L826 930L868 1000L884 1036L864 1030L826 990L800 922L756 902L772 880L738 836L716 796Z" fill="#e6e3b6" />
    <g clipPath="url(#us)">
      <rect x="460" y="120" width="1620" height="900" fill="#b1d4ce" />
      <g filter="url(#soft)" opacity=".8">
        <path d="M500 140H680L640 190L540 240L560 420H490Z" fill="#6a9fa0" /><path d="M700 150H800L830 290L760 370L700 330Z" fill="#6fa2a2" />
        <ellipse cx="890" cy="330" rx="50" ry="26" fill="#8fbab4" /><ellipse cx="950" cy="540" rx="30" ry="90" fill="#8db6ae" /><ellipse cx="820" cy="650" rx="40" ry="50" fill="#9fc5bd" /><ellipse cx="1290" cy="780" rx="40" ry="60" fill="#7fb5a8" />
        <path d="M1320 150H1480L1460 230L1330 220Z" fill="#72a9ad" /><path d="M1400 230H1600V290H1400Z" fill="#6aa2a2" />
        <path d="M1320 610H1400V860H1320Z" fill="#7db3a6" /><path d="M1400 680H1660V810H1400Z" fill="#74af9f" /><path d="M1640 510H1800V720H1640Z" fill="#7db6a4" />
        <path d="M1500 560H1680V680H1460Z" fill="#8ec2b0" /><path d="M1800 310H2050V480H1690V420Z" fill="#6fab9f" /><ellipse cx="1650" cy="900" rx="30" ry="80" fill="#88b8b4" />
      </g>
    </g>
    <path d="M794 444L812 440L822 462L806 466Z" fill="#7fb2d8" />
    <path d="M486 422H610V536L758 668L764 688L750 712L754 746L680 748L654 732L600 706L580 670L545 600L502 532L480 480Z" fill="#c6ad78" />
    <g filter="url(#soft)"><path d="M505 440H590L590 540L540 520Z" fill="#8e8657" /><path d="M600 560L660 600L640 640L600 600Z" fill="#a08c5a" /></g>
    <path d="M538 470L552 490L560 540L640 650L620 660L560 580Z" fill="#d8c08f" opacity=".5" />
    <g fill="none" stroke="#2b5792" strokeWidth="4" strokeLinejoin="round">
      <path d={US} />
      <path d="M495 262L530 284L600 280L640 270L687 268M685 150V268L697 290L685 320L687 422M712 150V190L740 230L758 260L760 290L780 310L797 330L848 322M848 310H1037M848 310V460M610 422H848M1037 150V460M848 460H1090V597M1037 272H1240M1037 383H1180L1210 390L1240 396M1090 493H1275M765 422V628L750 630L748 668L764 688L752 750M765 597H1293M903 460V785M1066 597V763H968M1066 613H1148V685L1170 694L1200 700L1260 700L1305 712M1225 150L1230 210L1242 272V370H1385M1242 370L1240 396L1255 430L1270 470L1293 510L1297 610L1305 712L1310 770L1322 800L1316 838M1270 472H1382M1297 613H1423M1310 730H1390" />
      <path d="M1362 240L1342 290L1348 320L1385 350L1392 382L1412 405L1392 440L1380 480L1400 530L1430 568L1442 600L1420 634L1404 680L1392 720L1394 752L1376 796H1424L1430 820M1412 405H1489M1490 432L1487 540L1470 580L1442 600L1482 568L1520 558L1562 530L1592 542L1622 544L1650 512L1676 478M1562 432V530M1510 433H1610M1676 424V505H1825M1690 421H1820L1836 450L1824 478L1844 492M1873 308V370L1868 456M1922 310L1902 350L1896 396M1870 397H1946M1870 423H1932V440M1936 300V362M1440 612H1812M1412 662H1610M1572 662L1600 640L1648 612L1690 580L1728 540L1762 514L1786 530M1610 665L1690 662L1740 702M1600 662L1640 710L1660 766M1471 662L1462 812M1540 665L1548 740L1558 803H1652M1480 797H1557M1622 544L1640 588L1690 580M1410 250L1460 262L1482 284V320M1712 505L1740 524L1762 514" />
    </g>
    <path d="M1542 290L1520 330L1526 372L1514 424L1494 424L1488 372L1500 316Z" fill="#93aed3" opacity=".7" />
    <path d="M486 422H606V540L758 672L764 690L750 712L754 742L682 746L654 722L630 736L600 700L580 670L545 600L502 532L484 480Z" fill="none" stroke="#fb8412" strokeWidth="16" strokeLinejoin="round" />
    <path d="M586 684L640 694L662 716L650 742L612 722Z" fill="#fb8412" />
    <g fontFamily="Open Sans, Noto Sans, sans-serif" textAnchor="middle" fontWeight="700" fontSize="30" fill="#4c6a7c">
      {STATES.map(([t, x, y]) => <text key={t} x={x} y={y} fill={t === "CA" ? "#7b6234" : undefined}>{t}</text>)}
      <g fill="#33402f"><text x="1494" y="79">ON</text><text x="2058" y="244">NB</text><text x="2154" y="265">PE</text><text x="2147" y="326">NS</text></g>
      <text x="1062" y="994" fontSize="46" fill="#3c3a30">MEXICO</text>
    </g>
    <g fontFamily="Open Sans, Noto Sans, sans-serif" fontSize="24" fill="#4c5a70" stroke="#e9edf0" strokeWidth="6" paintOrder="stroke" strokeOpacity=".7">
      {CITIES.map(([t, x, y]) => <text key={t} x={x} y={y}>{t}</text>)}
    </g>
    <g fill="#333c48">{[[518, 140], [1010, 504], [1236, 738], [1274, 832], [1706, 358], [1866, 290], [1626, 1034]].map(([x, y]) => <circle key={x} cx={x} cy={y} r="5" />)}</g>
  </svg>
);

const RoundIcon = ({ d }) => (
  <svg width="20" height="20" viewBox="0 0 20 20" fill="#fff" stroke="#8a97a3" strokeWidth="1.400"><circle cx="10" cy="10" r="9" /><path d={d} stroke={INK} strokeWidth="2.200" /></svg>
);

export default function App() {
  return (
    <Window>
      <Global />
      <Toolbar>
        <Grip />
        <Tool>{ic.New}New</Tool><Tool>{ic.Open}Open</Tool><Tool>{ic.Save}Save</Tool>
        <Rule />
        <Tool>{ic.Run}Run</Tool><DropArrow aria-label="Run options"><Tri d="down" s={10} /></DropArrow><Tool $off disabled>{ic.Stop}Stop</Tool>
        <Rule />
        <Tool $off disabled>{ic.Cut}Cut</Tool><Tool $off disabled>{ic.Copy}Copy</Tool><Tool $off disabled>{ic.Paste}Paste</Tool><Tool>{ic.Undo}Undo</Tool><Tool $off disabled>{ic.Redo}Redo</Tool>
        <Rule />
        <Tool $on>{ic.Select}Select</Tool><Tool>{ic.Pan}Pan</Tool><Tool>{ic.ZoomIn}Zoom In</Tool><Tool>{ic.ZoomOut}Zoom Out</Tool>
        <Rule />
        <ZoomGroup>
          <ZoomField aria-label="Zoom level" defaultValue="80%" />
          <RoundButton aria-label="Zoom out"><RoundIcon d="M5 10H15" /></RoundButton>
          <SliderBox><Ticks><span /><span /><span /></Ticks><Slider type="range" aria-label="Zoom" min="0" max="100" defaultValue="40" /></SliderBox>
          <RoundButton aria-label="Zoom in"><RoundIcon d="M5 10H15M10 5V15" /></RoundButton>
        </ZoomGroup>
        <Tool>{ic.Extents}Extents</Tool><Tool>{ic.Maximize}Maximize</Tool><Tool>{ic.FullScreen}Full Screen</Tool>
        <Rule />
        <Tool>{ic.Reader}Reader</Tool><Tool>{ic.Writer}Writer</Tool><Tool>{ic.Transformer}Transformer</Tool><Tool>{ic.Annotation}Annotation</Tool><Tool>{ic.Bookmark}Bookmark</Tool>
        <Rule />
        <Tool>{ic.AutoLayout}Auto-Layout</Tool>
        <Spacer /><Chevrons />
      </Toolbar>
      <Body>
        <Sidebar>
          <Head h={30}>Navigator</Head>
          <TreeList items={NAV} flex="678 1 0" label="Navigator" />
          <HandleDots $h={12} />
          <Head h={30}>Transformer Gallery</Head>
          <TreeList items={GALLERY} flex="288 1 0" label="Transformer Gallery" />
          <SearchRow>
            <Combo $icon $flex="1"><Lens s={18} /><input aria-label="Search transformers" /><ComboArrow $split><Tri d="down" s={10} /></ComboArrow></Combo>
            <button aria-label="Refresh"><svg width="24" height="26" viewBox="0 0 24 26" fill="none" stroke={INK} strokeWidth="3.400"><path d="M19 6A9 9.500 0 1 0 20 18" /><path d="M23 1V11H13Z" fill={INK} stroke="none" /></svg></button>
          </SearchRow>
        </Sidebar>
        <Main>
          <Tabs><Tab>Start <Cross s={12} /></Tab><Tab $on>Main <Cross s={12} /></Tab></Tabs>
          <Workspace>
            <Canvas>
              <BM x={264} w={290} h={369} line="#a0cf97" fill="#eaf3e6">Reader Feature Types</BM>
              <BM x={579} w={440} h={371} line="#94bde8" fill="#e8f1fa">Main Workflow</BM>
              <BM x={1043} w={321} h={367} line="#fcd78c" fill="#fef7e9">Writer Feature Types</BM>
              <Grid />
              <FeatureType x={303} y={139} name="2018...tate" inspect /><FeatureType x={303} y={250} name="ROADS" />
              <Transformer x={627} y={90} name="DateTimeConverter" ports={["Output", "<Rejected>"]} />
              <Transformer x={842} y={129} name="Reprojector" ports={["Reprojected"]} />
              <Transformer x={727} y={227} name="GeometryValidator" ports={["Passed", "Failed", "Repaired", "IssueLocations", "InvalidParts", "<Rejected>"]} />
              <FeatureType x={1097} y={139} name="STATES" writer /><FeatureType x={1097} y={250} name="ROADS" writer />
              <Links />
            </Canvas>
            <ScrollV><Tri d="up" s={10} /><Thumb $v $from="17%" $len="70%" /><Tri d="down" s={10} /></ScrollV>
            <ScrollH><Tri d="left" s={10} /><Thumb $from="24px" $len="85%" /><Tri s={10} /></ScrollH>
          </Workspace>
          <Dock>
            <HandleDots $h={11} />
            <Head h={26} wide>Visual Preview</Head>
            <DockBody>
              <ToolColumn>
                <SideTool aria-label="Inspect selection"><S s={24}><path d="M6 1H26V14H6Z" fill="#5b9bdc" strokeDasharray="3 2" /><circle cx="13" cy="18" r="8" fill="#cfe2f2" strokeWidth="3" /><path d="M9 18H17M8 24L2 31" strokeWidth="3" /><path d="M18 14L31 25L25 26L28 31L24 32L18 26Z" fill={INK} stroke="none" /></S></SideTool>
                <SideRule />
                <SideTool aria-label="Display control"><S s={24}><path d="M2 1H30V31H2Z" fill="#e8f3f7" strokeWidth="2" /><path d="M2 1H30V8H2Z" fill="#3d7cc2" /><path d="M9 8V31" /></S></SideTool>
                <SideTool $on aria-label="Table view"><S s={24}><path d="M2 1H30V31H2Z" fill="#fff" strokeWidth="2" /><path d="M2 1H30V8H2Z" fill="#86b7e6" /><path d="M2 8H30M2 16H30M2 23H30M11 1V31M21 1V31" stroke="#3a6b9c" strokeWidth="2" /></S></SideTool>
                <SideTool $on aria-label="Graphics view"><S s={24}><path d="M2 1H30V31H2Z" fill="#6bbd78" stroke="#3c7446" strokeWidth="2" /><path d="M7 18L18 6V18L26 16M7 18L11 26H21L26 16" fill="#eef6c4" strokeWidth="2" /><path d="M16 4H20V8H16ZM5 16H9V20H5ZM24 14H28V18H24ZM9 24H13V28H9ZM19 24H23V28H19Z" fill={INK} stroke="none" /></S></SideTool>
                <SideTool aria-label="Feature information"><S s={24}><path d="M1 1H25V31H1Z" fill="#eee" stroke="#777" /><path d="M4 6H22M4 11H22M4 16H14M4 21H12M4 26H12" stroke="#777" strokeWidth="2" /><circle cx="22" cy="19" r="9" fill="#fad57c" stroke="#8c6d31" /><path d="M22 18V24M22 13V16" strokeWidth="3" /></S></SideTool>
                <SideRule />
                <SideTool aria-label="Data inspector"><S s={24} stroke="#c0703a"><path d="M1 10L6 4L10 7M14 3L18 6L23 3M27 5L31 11" strokeWidth="3" stroke="#e0a27c" /><circle cx="17" cy="14" r="7" fill="#fde2c8" strokeWidth="3" /><path d="M13 20L4 31" strokeWidth="4" stroke="#7b4b2a" /></S></SideTool>
              </ToolColumn>
              <Group $w={761}>
                <GroupTitle>Table</GroupTitle>
                <GroupBox $pad="8px 9px 8px">
                  <Line $gap={9} $mb={9}>
                    <Combo $flex="1"><select aria-label="Feature type"><option>2018_US_State</option></select><ComboArrow $split><Tri d="down" s={10} /></ComboArrow></Combo>
                    <PushButton>Columns...</PushButton>
                  </Line>
                  <TableFrame>
                    <TableView>
                      <Data>
                        <colgroup><col style={{ width: 27 }} />{COLS.map((c, i) => <col key={c} style={{ width: i < 4 ? 139 : undefined }} />)}</colgroup>
                        <thead><tr><th />{COLS.map(c => <th key={c} scope="col">{c}</th>)}</tr></thead>
                        <tbody>
                          {ROWS.map(([n, fp, ns, ab]) => (
                            <tr key={n} aria-selected={n === 13}><th scope="row">{n}</th><td>{fp}</td><td>{ns}</td><td>{"0400000US" + fp}</td><td>{fp}</td><td>{ab}</td></tr>
                          ))}
                        </tbody>
                      </Data>
                    </TableView>
                    <ScrollV><Tri d="up" s={10} /><Thumb $v $from="17%" $len="23%" /><Tri d="down" s={10} /></ScrollV>
                    <ScrollH><Tri d="left" s={10} /><Thumb $from="20px" $len="42%" /><Tri s={10} /></ScrollH>
                  </TableFrame>
                  <Line $gap={9}>
                    <Combo $icon $flex="1"><Lens s={22} /><input aria-label="Search table" /></Combo>
                    <label htmlFor="column">in</label>
                    <Combo $plain $flex="1"><select id="column"><option>any column</option></select><ComboArrow><Tri d="down" s={10} /></ComboArrow></Combo>
                    <span>1 selected / 52 row(s)</span>
                  </Line>
                </GroupBox>
              </Group>
              <Divider />
              <Group>
                <GroupTitle>Graphics</GroupTitle>
                <GroupBox $pad="11px 0 11px">
                  <GraphicsTools>
                    <Tool $small $on>{g.d2}2D</Tool><Tool $small>{g.d3}3D</Tool><Tool $small>{g.slide}Slideshow</Tool>
                    <Rule $small />
                    <Tool $small $off disabled>{g.orbit}Orbit</Tool><Tool $small $on>{g.sel}Select</Tool><Tool $small>{small(ic.Pan)}Pan</Tool><Tool $small>{small(ic.ZoomIn)}Zoom In</Tool><Tool $small>{small(ic.ZoomOut)}Zoom Out</Tool>
                    <Rule $small />
                    <Tool $small>{g.zsel}Zoom Selected</Tool><Tool $small>{g.zext}Zoom Extents</Tool>
                    <Rule $small />
                    <Spacer /><Chevrons />
                  </GraphicsTools>
                  <MapFrame><Map /></MapFrame>
                  <Status>
                    <Coordinates><span>X:</span><span>-99.6962</span><span>Y:</span><span>50.5186</span></Coordinates>
                    <Combo $plain $w="276px"><select aria-label="Coordinate system"><option>LL-WGS84</option></select><ComboArrow><Tri d="down" s={10} /></ComboArrow></Combo>
                    <span>DEGREE</span>
                  </Status>
                </GroupBox>
              </Group>
            </DockBody>
            <BottomTabs><BottomTab>Translation Log</BottomTab><BottomTab $on>Visual Preview</BottomTab></BottomTabs>
          </Dock>
        </Main>
      </Body>
    </Window>
  );
}
